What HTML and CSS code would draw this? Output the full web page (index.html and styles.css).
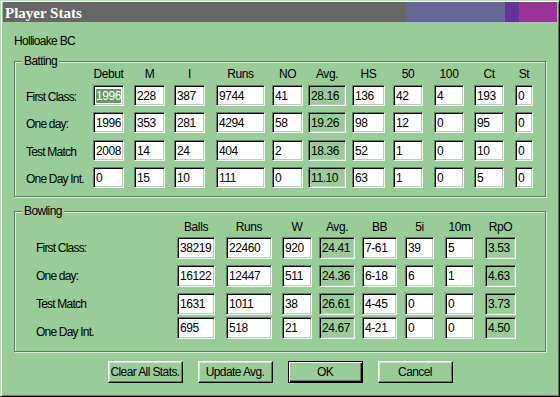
FILE: index.html
```html
<!DOCTYPE html>
<html lang="en">
<head>
<meta charset="UTF-8" />
<title>Player Stats</title>
<link rel="stylesheet" href="styles.css">
</head>
<body>
<div class="window">
  <div class="titlebar">Player Stats</div>
  <div class="content">
    <div class="player">Hollioake BC</div>

    <fieldset class="group">
      <legend>Batting</legend>
      <div class="grid batting">
        <span></span>
        <span class="head">Debut</span>
        <span class="head">M</span>
        <span class="head">I</span>
        <span class="head">Runs</span>
        <span class="head">NO</span>
        <span class="head">Avg.</span>
        <span class="head">HS</span>
        <span class="head">50</span>
        <span class="head">100</span>
        <span class="head">Ct</span>
        <span class="head">St</span>

        <span class="row-label">First Class:</span>
        <input id="fc-debut" value="1996"><input value="228"><input value="387"><input value="9744"><input value="41">
        <input class="calc" readonly value="28.16"><input value="136"><input value="42"><input value="4"><input value="193"><input value="0">

        <span class="row-label">One day:</span>
        <input value="1996"><input value="353"><input value="281"><input value="4294"><input value="58">
        <input class="calc" readonly value="19.26"><input value="98"><input value="12"><input value="0"><input value="95"><input value="0">

        <span class="row-label">Test Match</span>
        <input value="2008"><input value="14"><input value="24"><input value="404"><input value="2">
        <input class="calc" readonly value="18.36"><input value="52"><input value="1"><input value="0"><input value="10"><input value="0">

        <span class="row-label">One Day Int.</span>
        <input value="0"><input value="15"><input value="10"><input value="111"><input value="0">
        <input class="calc" readonly value="11.10"><input value="63"><input value="1"><input value="0"><input value="5"><input value="0">
      </div>
    </fieldset>

    <fieldset class="group bowl-group">
      <legend>Bowling</legend>
      <div class="grid bowling">
        <span></span>
        <span class="head">Balls</span>
        <span class="head">Runs</span>
        <span class="head">W</span>
        <span class="head">Avg.</span>
        <span class="head">BB</span>
        <span class="head">5i</span>
        <span class="head">10m</span>
        <span class="head">RpO</span>

        <span class="row-label">First Class:</span>
        <input value="38219"><input value="22460"><input value="920"><input class="calc" readonly value="24.41">
        <input value="7-61"><input value="39"><input value="5"><input class="calc" readonly value="3.53">

        <span class="row-label">One day:</span>
        <input value="16122"><input value="12447"><input value="511"><input class="calc" readonly value="24.36">
        <input value="6-18"><input value="6"><input value="1"><input class="calc" readonly value="4.63">

        <span class="row-label">Test Match</span>
        <input value="1631"><input value="1011"><input value="38"><input class="calc" readonly value="26.61">
        <input value="4-45"><input value="0"><input value="0"><input class="calc" readonly value="3.73">

        <span class="row-label low">One Day Int.</span>
        <input value="695"><input value="518"><input value="21"><input class="calc" readonly value="24.67">
        <input value="4-21"><input value="0"><input value="0"><input class="calc" readonly value="4.50">
      </div>
    </fieldset>

    <div class="buttons">
      <button>Clear All Stats.</button>
      <button>Update Avg.</button>
      <button class="default">OK</button>
      <button>Cancel</button>
    </div>
  </div>
</div>
<script>
  const debutField = document.getElementById('fc-debut');
  debutField.focus();
  debutField.select();
</script>
</body>
</html>
```

FILE: styles.css
```css
* {
  box-sizing: border-box;
}
body {
  margin: 0;
  font-family: 'Liberation Sans', Arial, sans-serif;
  font-size: 12px;
  line-height: 14px;
  letter-spacing: -0.4px;
  color: #000;
  background: #99cc99;
}
.window {
  width: 560px;
  height: 397px;
  background: #99cc99;
  border: 1px solid;
  border-color: #b8deb8 #000 #000 #b8deb8;
  box-shadow: inset 1px 1px #f4fff4, inset -1px -1px #5f7f5f;
}
.titlebar {
  height: 20px;
  margin: 1px 2px 0 2px;
  padding: 2px 0 0 2px;
  font: bold 15px/18px 'Liberation Serif', 'Times New Roman', serif;
  letter-spacing: 0;
  color: #fff;
  background: linear-gradient(90deg, #666666 0 403px, #666699 403px 502px, #663399 502px 516px, #993399 516px);
}
.content {
  padding: 0 13px;
}
.player {
  margin: 12px 0 6px;
  letter-spacing: -0.7px;
}
/* group boxes */
.group {
  margin: 0;
  padding: 0 0 8px 11px;
  min-width: 0;
  border: 1px solid #5f7f5f;
  box-shadow: inset 1px 1px #d8ecd8, 1px 1px #d8ecd8;
}
.group legend {
  padding: 0 2px;
  margin-left: -4px;
  letter-spacing: -0.6px;
  background: #99cc99;
}
.bowl-group {
  margin-top: 7px;
  padding-bottom: 12px;
}
.grid {
  display: grid;
}
.grid .head {
  text-align: center;
  align-self: start;
  justify-self: start;
  white-space: nowrap;
}
.row-label {
  align-self: start;
  margin-top: 5px;
  white-space: nowrap;
  letter-spacing: -0.8px;
}
.grid input {
  justify-self: start;
  align-self: start;
  width: 31px;
  height: 21px;
  margin: 0;
  padding: 0 2px;
  font: inherit;
  letter-spacing: inherit;
  color: #000;
  background: #fff;
  border: 1px solid;
  border-color: #5f7f5f #eef8ee #eef8ee #5f7f5f;
  box-shadow: inset 1px 1px #000, inset -1px -1px #c0c8c0;
  border-radius: 0;
  outline: none;
}
.grid input.calc {
  background: #99cc99;
}
.grid input::selection {
  background: #669966;
  color: #fff;
}
/* batting columns */
.batting {
  margin-top: -1px;
  grid-template-columns: 67px 41px 40px 42px 56px 36px 44px 41px 41px 40px 41px 18px;
  grid-template-rows: 18px 27px 28px 27px 21px;
}
.batting > * { width: 31px; }
.batting > :nth-child(12n+1) { width: auto; }
.batting > :nth-child(12n+5) { width: 49px; }
.batting > :nth-child(12n+7) { width: 38px; }
.batting > :nth-child(12n+8) { width: 33px; }
.batting > :nth-child(12n+9),
.batting > :nth-child(12n+10),
.batting > :nth-child(12n+11) { width: 30px; }
.batting > :nth-child(12n) { width: 18px; }
/* bowling columns */
.bowling {
  margin-top: 2px;
  padding-left: 10px;
  grid-template-columns: 141px 49px 56px 37px 43px 43px 40px 40px 31px;
  grid-template-rows: 17px 28px 28px 24px 22px;
}
.bowling > :nth-child(9n+1) { width: auto; }
.bowling > :nth-child(9n+2) { width: 38px; }
.bowling > :nth-child(9n+3) { width: 46px; }
.bowling > :nth-child(9n+4) { width: 30px; }
.bowling > :nth-child(9n+5) { width: 36px; }
.bowling > :nth-child(9n+6) { width: 35px; }
.bowling > :nth-child(9n+7),
.bowling > :nth-child(9n+8) { width: 29px; }
.bowling > :nth-child(9n) { width: 31px; }
.bowling input {
  height: 22px;
}
.bowling .row-label {
  margin-top: 4px;
}
.bowling .row-label.low {
  margin-top: 8px;
}
/* buttons */
.buttons {
  display: flex;
  justify-content: center;
  gap: 15px;
  margin-top: 9px;
}
.buttons button {
  width: 75px;
  height: 22px;
  padding: 0;
  font: inherit;
  letter-spacing: -0.6px;
  white-space: nowrap;
  color: #000;
  background: #99cc99;
  border: 1px solid;
  border-color: #f4fff4 #000 #000 #f4fff4;
  box-shadow: inset -1px -1px #5f7f5f, inset 1px 1px #cfe7cf;
}
.buttons button.default {
  border-color: #000;
  box-shadow: inset 1px 1px #f4fff4, inset -1px -1px #000, inset -2px -2px #5f7f5f;
}
```
